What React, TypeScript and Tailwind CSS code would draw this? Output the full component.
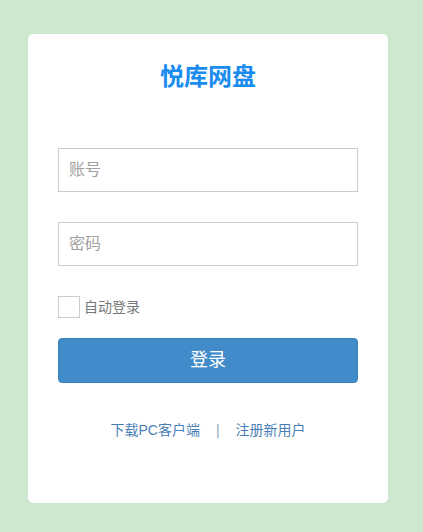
export default function App() {
  return (
    <div className="min-h-[532px] w-full bg-[#cde8cf] pt-[34px] font-['Liberation_Sans','Noto_Sans_CJK_SC',sans-serif]">
      <div className="ml-[28px] h-[469px] w-[360px] rounded-[5px] bg-white px-[30px] pt-[26px]">
        {/* Title */}
        <h1 className="text-center text-[24px] font-bold leading-[34px] text-[#1a8cf0]">悦库网盘</h1>

        <div className="mt-[54px]">
          <input
            type="text"
            placeholder="账号"
            className="h-[44px] w-full border border-[#cccccc] px-[10px] text-[16px] text-[#333] outline-none placeholder:text-[#a0a0a0]"
          />
        </div>
        <div className="mt-[30px]">
          <input
            type="password"
            placeholder="密码"
            className="h-[44px] w-full border border-[#cccccc] px-[10px] text-[16px] text-[#333] outline-none placeholder:text-[#a0a0a0]"
          />
        </div>

        <label className="mt-[30px] flex items-center gap-[4px]">
          <span className="h-[22px] w-[22px] border border-[#cccccc] bg-white" />
          <span className="text-[14px] leading-[22px] text-[#777]">自动登录</span>
        </label>

        <button className="mt-[20px] h-[45px] w-full rounded-[4px] border border-[#3a7fbd] bg-[#428bca] text-[18px] text-white">
          登录
        </button>

        <div className="mt-[37px] flex items-center justify-center text-[14px] leading-[20px] text-[#4a7fb5]">
          <a href="#">下载PC客户端</a>
          <span className="mx-[16px] text-[#8aa4bf]">|</span>
          <a href="#">注册新用户</a>
        </div>
      </div>
    </div>
  );
}
